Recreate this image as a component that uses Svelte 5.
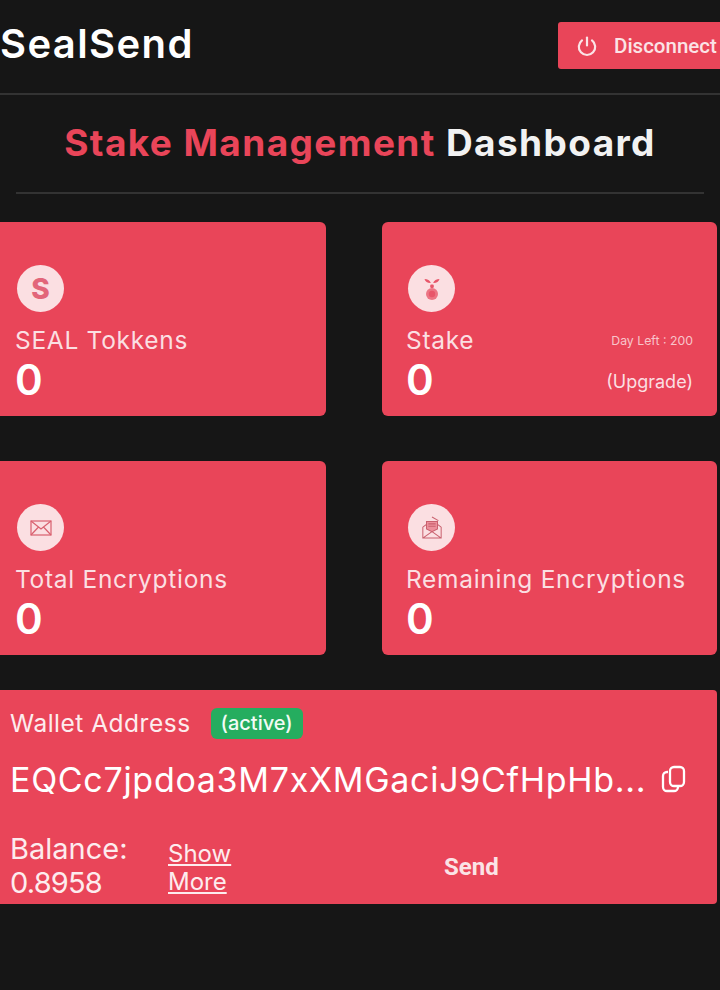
<script>
const cards = [
	{ title: "SEAL Tokkens", value: "0", icon: "s" },
	{ title: "Stake", value: "0", icon: "seal", extra: true },
	{ title: "Total Encryptions", value: "0", icon: "mail" },
	{ title: "Remaining Encryptions", value: "0", icon: "open" },
];
</script>

<div class="page">
	<header class="topbar">
		<span class="brand">SealSend</span>
		<button class="disconnect">
			<svg width="24" height="24" viewBox="0 0 24 24" fill="none" stroke="currentColor" stroke-width="2.2" stroke-linecap="round">
				<path d="M12 3.500v8" />
				<path d="M7 6.300a8.200 8.200 0 1 0 10 0" />
			</svg>
			<span>Disconnect</span>
		</button>
	</header>

	<h1 class="heading"><span class="accent">Stake Management</span> Dashboard</h1>
	<div class="rule"></div>

	<section class="grid">
		{#each cards as card}
			<div class="card">
				<div class="badge">
					{#if card.icon === "s"}
						<span class="badge-s">S</span>
					{:else if card.icon === "seal"}
						<svg width="26" height="28" viewBox="0 0 26 28" fill="#e8566a">
							<path d="M5.500 4c3 0 5.500 1.500 6.300 4-3 .3-5.500-1.300-6.300-4z" />
							<path d="M20.500 4c-3 0-5.500 1.500-6.300 4 3 .3 5.500-1.300 6.300-4z" />
							<rect x="11.200" y="9.500" width="3.600" height="3.400" rx="1.200" />
							<circle cx="13" cy="19" r="6" fill="#ec7584" />
							<circle cx="13" cy="19" r="3.200" />
						</svg>
					{:else if card.icon === "mail"}
						<svg width="24" height="18" viewBox="0 0 24 18" fill="none" stroke="#d9606f" stroke-width="1.2">
							<rect x="2" y="2" width="20" height="14" />
							<path d="M2 2l10 8 10-8M2 16l7.500-8M22 16l-7.500-8" />
						</svg>
					{:else}
						<svg width="22" height="24" viewBox="0 0 24 26" fill="none" stroke="#c9606e" stroke-width="1.1">
							<path d="M2 12v12h20V12M2 12l4-3M22 12l-4-3M2 24l10-7 10 7" />
							<path d="M6 14V6h12v8l-6 3z" fill="#ec8f9b" />
							<path d="M8 8.500h8M8 11h8" />
							<path d="M12 1l7 4" />
						</svg>
					{/if}
				</div>
				<div class="card-row">
					<span class="card-title">{card.title}</span>
					{#if card.extra}<span class="days">Day Left : 200</span>{/if}
				</div>
				<div class="card-row">
					<span class="card-value">{card.value}</span>
					{#if card.extra}<span class="upgrade">(Upgrade)</span>{/if}
				</div>
			</div>
		{/each}
	</section>

	<section class="wallet">
		<div class="wallet-head">
			<span class="wallet-label">Wallet Address</span>
			<span class="active">(active)</span>
		</div>
		<div class="address-row">
			<span class="address">EQCc7jpdoa3M7xXMGaciJ9CfHpHb...</span>
			<svg class="copy" width="26" height="28" viewBox="0 0 26 28" fill="none" stroke="currentColor" stroke-width="2.300" stroke-linejoin="round">
				<rect x="9" y="2" width="14" height="19" rx="4" />
				<path d="M7 7H6a4 4 0 0 0-4 4v11a4 4 0 0 0 4 4h7a4 4 0 0 0 4-4v-1" />
			</svg>
		</div>
		<div class="wallet-foot">
			<div class="balance">Balance:<br /><span class="amount">0.8958</span></div>
			<div class="more"><u>Show</u><br /><u>More</u></div>
			<div class="send">Send</div>
		</div>
	</section>
</div>

<style>
	:global(body) {
		background: #161616;
		font-family: Inter, "Open Sans", sans-serif;
		overflow: hidden;
	}
	.page {
		width: 720px;
		height: 990px;
		overflow: hidden;
		background: #161616;
		color: #fff;
	}
	.topbar {
		display: flex;
		align-items: flex-start;
		justify-content: space-between;
		height: 93px;
		border-bottom: 2px solid #333;
		box-sizing: content-box;
	}
	.brand {
		font-size: 40px;
		font-weight: 600;
		letter-spacing: 1.400px;
		line-height: 46px;
		margin-top: 21px;
	}
	.disconnect {
		display: flex;
		align-items: center;
		gap: 15px;
		width: 166px;
		height: 47px;
		margin: 22px -4px 0 0;
		padding: 0 0 0 17px;
		flex-shrink: 0;
		border: 0;
		border-radius: 3px;
		background: #e94559;
		color: #fbe3e6;
		font-family: Roboto, sans-serif;
		font-size: 20.500px;
		font-weight: 500;
		white-space: nowrap;
	}
	.heading {
		margin: 0;
		padding-top: 25px;
		text-align: center;
		font-size: 37px;
		font-weight: 700;
		letter-spacing: 1.400px;
		line-height: 46px;
		color: #f2f2f2;
	}
	.accent {
		color: #e94559;
	}
	.rule {
		height: 2px;
		margin: 26px 16px 0;
		background: #333;
	}
	.grid {
		display: grid;
		grid-template-columns: 335px 335px;
		column-gap: 56px;
		row-gap: 45px;
		margin: 28px 0 0 -9px;
	}
	.card {
		box-sizing: border-box;
		height: 194px;
		padding: 43px 24px 0;
		background: #e94559;
		border-radius: 6px;
	}
	.badge {
		display: flex;
		align-items: center;
		justify-content: center;
		width: 47px;
		height: 47px;
		margin-left: 2px;
		border-radius: 50%;
		background: #fbdfe2;
	}
	.badge-s {
		color: #e2667a;
		font-size: 28px;
		font-weight: 800;
	}
	.card-row {
		display: flex;
		align-items: center;
		justify-content: space-between;
	}
	.card-title {
		margin-top: 14px;
		font-size: 24.500px;
		letter-spacing: 0.700px;
		line-height: 29px;
		color: #fbdfe2;
	}
	.card-value {
		font-size: 42px;
		font-weight: 600;
		line-height: 50px;
		color: #fff;
	}
	.days {
		font-size: 12.300px;
		color: #f8c4ca;
		margin-top: 14px;
	}
	.upgrade {
		font-size: 18px;
		color: #fbdfe2;
		margin-top: 2px;
	}
	.wallet {
		box-sizing: border-box;
		width: 726px;
		height: 214px;
		margin: 35px 0 0 -9px;
		padding: 18px 0 0 19px;
		background: #e94559;
		border-radius: 4px;
	}
	.wallet-head {
		display: flex;
		align-items: center;
		gap: 20px;
		height: 30px;
	}
	.wallet-label {
		font-size: 24.500px;
		letter-spacing: 0.500px;
		color: #fdecee;
	}
	.active {
		display: flex;
		align-items: center;
		height: 31px;
		padding: 0 10px;
		border-radius: 6px;
		background: #25ad5f;
		font-size: 20px;
		font-weight: 500;
		color: #f2fbf5;
	}
	.address-row {
		display: flex;
		align-items: center;
		gap: 15px;
		margin-top: 19px;
		height: 44px;
	}
	.address {
		font-size: 34px;
		letter-spacing: 0.700px;
		white-space: nowrap;
		color: #fff;
	}
	.copy {
		flex-shrink: 0;
		color: #fff;
	}
	.wallet-foot {
		display: flex;
		align-items: center;
		margin-top: 31px;
	}
	.balance {
		width: 158px;
		font-size: 29px;
		line-height: 34px;
		color: #fdecee;
	}
	.amount {
		letter-spacing: -0.800px;
	}
	.more {
		width: 110px;
		margin-top: 4px;
		font-size: 24px;
		line-height: 28px;
		color: #fdecee;
	}
	.send {
		margin: 2px 0 0 166px;
		font-family: Roboto, sans-serif;
		font-size: 24px;
		font-weight: 700;
		color: #fbe3e6;
	}
</style>
